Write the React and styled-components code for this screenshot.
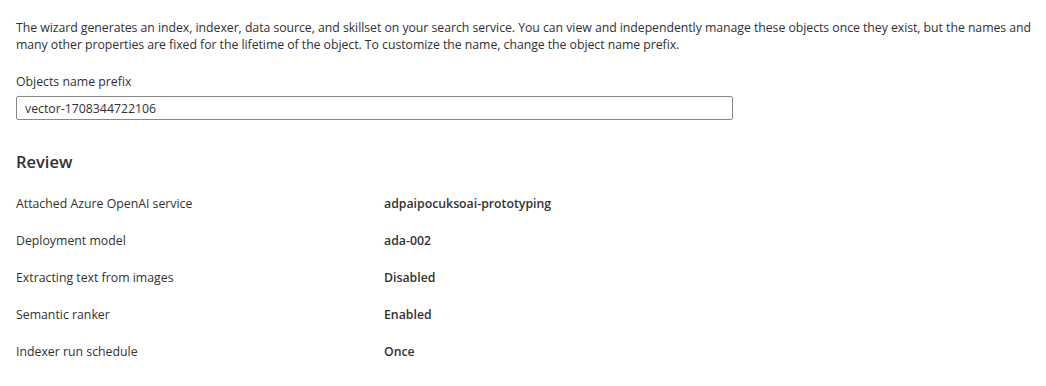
import React from 'react';
import styled, { createGlobalStyle } from 'styled-components';

const GlobalStyle = createGlobalStyle`
    body {
        margin: 0;
        background: #ffffff;
        font-family: "Open Sans", "Noto Sans", sans-serif;
        color: #323130;
    }
`

const Page = styled.div`
    padding: 19px 16px 0 16px;
    display: flex;
    flex-direction: column;
`

const Intro = styled.p`
    margin: 0;
    font-size: 12.3px;
    line-height: 17px;
    letter-spacing: -0.05px;
    white-space: nowrap;
`

const Field = styled.div`
    display: flex;
    flex-direction: column;
    margin-top: 20px;
    gap: 6px;
`

const Label = styled.label`
    font-size: 12.3px;
    line-height: 17px;
`

const TextInput = styled.input`
    box-sizing: border-box;
    width: 717px;
    height: 24px;
    border: 1px solid #8a8886;
    border-radius: 2px;
    padding: 0 8px;
    font-family: inherit;
    font-size: 12.3px;
    color: #323130;
    outline: none;
`

const SectionHeader = styled.h2`
    margin: 30px 0 0 0;
    font-size: 16.5px;
    font-weight: 600;
    line-height: 24px;
`

const ReviewList = styled.div`
    display: flex;
    flex-direction: column;
    margin-top: 11px;
`

const Row = styled.div`
    display: grid;
    grid-template-columns: 368px 1fr;
    height: 37px;
    align-items: center;
    font-size: 12.3px;
`

const Value = styled.span`
    font-weight: 600;
`

const reviewItems = [
    { label: 'Attached Azure OpenAI service', value: 'adpaipocuksoai-prototyping' },
    { label: 'Deployment model', value: 'ada-002' },
    { label: 'Extracting text from images', value: 'Disabled' },
    { label: 'Semantic ranker', value: 'Enabled' },
    { label: 'Indexer run schedule', value: 'Once' },
]

const App = () => {
    return (
        <Page>
            <GlobalStyle />
            <Intro>
                The wizard generates an index, indexer, data source, and skillset on your search service. You can view and independently manage these objects once they exist, but the names and
                <br />
                many other properties are fixed for the lifetime of the object. To customize the name, change the object name prefix.
            </Intro>
            <Field>
                <Label>Objects name prefix</Label>
                <TextInput defaultValue='vector-1708344722106' />
            </Field>
            <SectionHeader>Review</SectionHeader>
            <ReviewList>
                {
                    reviewItems.map(item => {
                        return (
                            <Row key={item.label}>
                                <span>{item.label}</span>
                                <Value>{item.value}</Value>
                            </Row>
                        )
                    })
                }
            </ReviewList>
        </Page>
    )
}

export default App;
